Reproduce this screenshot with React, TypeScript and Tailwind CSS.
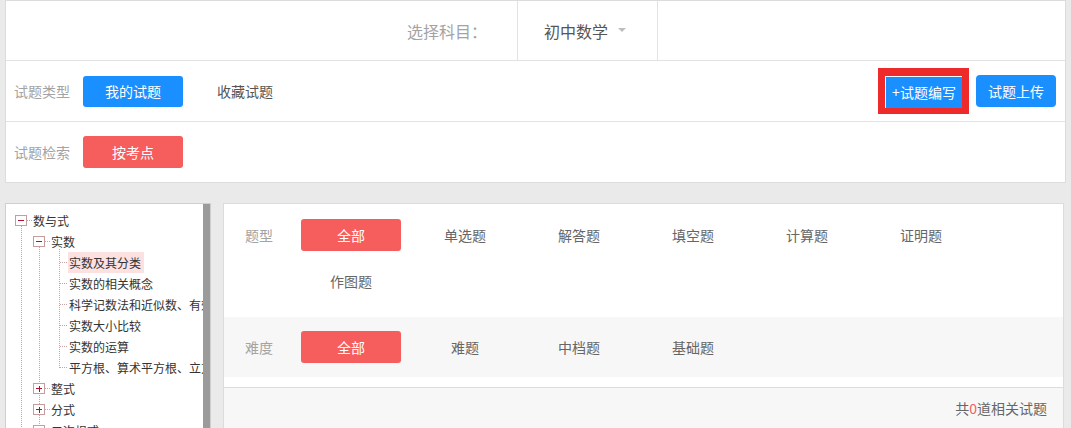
import React from "react";

const font = { fontFamily: '"Noto Sans CJK SC", "Noto Sans", sans-serif' };

const typeItems = ["全部", "单选题", "解答题", "填空题", "计算题", "证明题", "作图题"];
const levelItems = ["全部", "难题", "中档题", "基础题"];

const leaves = [
  "实数及其分类",
  "实数的相关概念",
  "科学记数法和近似数、有效数字",
  "实数大小比较",
  "实数的运算",
  "平方根、算术平方根、立方根",
];

const TreeBox = ({ open }: { open: boolean }) => (
  <svg width="12" height="11" viewBox="0 0 12 11" className="shrink-0" shapeRendering="crispEdges">
    <rect x="0.5" y="0.5" width="11" height="10" fill="#fff" stroke="#c79c9c" />
    <line x1="3" y1="5.5" x2="9" y2="5.5" stroke="#b0102a" />
    {!open && <line x1="6.5" y1="2.5" x2="6.5" y2="9" stroke="#b0102a" />}
  </svg>
);

const FilterItem = ({ label, active }: { label: string; active?: boolean }) => (
  <div className="flex h-[32px] w-[114px] items-center justify-center">
    {active ? (
      <span className="flex h-[32px] w-[100px] items-center justify-center rounded-[3px] bg-[#f65d5d] text-[14px] text-white">
        {label}
      </span>
    ) : (
      <span className="text-[14px] text-[#666]">{label}</span>
    )}
  </div>
);

const App = () => {
  return (
    <div className="h-[428px] overflow-hidden bg-[#eaeaea] px-[5px]" style={font}>
      {/* top filter card */}
      <div className="border border-[#dcdcdc] bg-white">
        <div className="flex h-[60px] border-b border-[#e2e2e2]">
          <div className="flex w-[511px] items-center justify-end pr-[30px] text-[16px] text-[#a3a3a3]">选择科目：</div>
          <div className="flex w-[141px] items-center border-x border-[#e2e2e2] pl-[26px] text-[16px] text-[#555]">
            初中数学
            <svg width="8" height="5" viewBox="0 0 8 5" className="ml-[10px]">
              <path d="M0 0 L8 0 L4 4 Z" fill="#bdbdbd" />
            </svg>
          </div>
          <div className="flex-1" />
        </div>
        <div className="flex h-[61px] items-center border-b border-[#e2e2e2] pl-[8px] pr-[9px]">
          <span className="text-[14px] text-[#a3a3a3]">试题类型</span>
          <button className="ml-[13px] flex h-[31px] w-[100px] items-center justify-center rounded-[3px] bg-[#1a8fff] text-[14px] text-white">
            我的试题
          </button>
          <span className="ml-[34px] text-[14px] text-[#555]">收藏试题</span>
          <div className="flex-1" />
          <div className="border-[7px] border-t-[8px] border-b-[6px] border-[#ee2a2a]">
            <button className="flex h-[32px] w-[77px] items-center justify-center border-l border-t border-white bg-[#1a8fff] text-[14px] text-white">
              +试题编写
            </button>
          </div>
          <button className="ml-[7px] flex h-[32px] w-[80px] items-center justify-center rounded-[4px] bg-[#1a8fff] text-[14px] text-white">
            试题上传
          </button>
        </div>
        <div className="flex h-[60px] items-center pl-[8px]">
          <span className="text-[14px] text-[#a3a3a3]">试题检索</span>
          <button className="ml-[13px] flex h-[32px] w-[100px] items-center justify-center rounded-[3px] bg-[#f65d5d] text-[14px] text-white">
            按考点
          </button>
        </div>
      </div>

      {/* lower area */}
      <div className="mt-[20px] flex h-[300px] items-start">
        {/* knowledge tree */}
        <div className="flex h-[300px] w-[206px] border border-[#cfcfcf] bg-white">
          <div className="relative flex-1 overflow-hidden whitespace-nowrap pt-[6px] text-[12px] text-[#333]">
            <svg className="absolute left-0 top-0" width="197" height="300" shapeRendering="crispEdges">
              <g stroke="#c9a3a3" strokeDasharray="1 1">
                <line x1="15.5" y1="22" x2="15.5" y2="300" />
                <line x1="21" y1="16.5" x2="27" y2="16.5" />
                <line x1="33.5" y1="43" x2="33.5" y2="300" />
                <line x1="39" y1="37.5" x2="45" y2="37.5" />
                <line x1="53.5" y1="45" x2="53.5" y2="164" />
                {leaves.map((_, i) => (
                  <line key={i} x1="54" y1={58.5 + i * 21} x2="62" y2={58.5 + i * 21} />
                ))}
                <line x1="39" y1="184.5" x2="45" y2="184.5" />
                <line x1="39" y1="205.5" x2="45" y2="205.5" />
                <line x1="39" y1="226.5" x2="45" y2="226.5" />
              </g>
            </svg>
            <div className="relative flex h-[21px] items-center pl-[9px]">
              <TreeBox open />
              <span className="ml-[6px]">数与式</span>
            </div>
            <div className="relative flex h-[21px] items-center pl-[27px]">
              <TreeBox open />
              <span className="ml-[6px]">实数</span>
            </div>
            {leaves.map((t, i) => (
              <div key={t} className="relative flex h-[21px] items-center pl-[62px]">
                <span className={`flex h-[21px] items-center pl-[1px] pr-[3px] ${i === 0 ? "bg-[#fde1e1]" : ""}`}>{t}</span>
              </div>
            ))}
            {["整式", "分式", "二次根式"].map((t) => (
              <div key={t} className="relative flex h-[21px] items-center pl-[27px]">
                <TreeBox open={false} />
                <span className="ml-[6px]">{t}</span>
              </div>
            ))}
          </div>
          <div className="w-[7px] bg-[#9b9b9b]" />
        </div>

        {/* question filter panel */}
        <div className="ml-[12px] mr-[2px] flex-1 border border-[#dcdcdc] bg-white">
          <div className="flex pl-[21px] pt-[15px] pb-[20px]">
            <div className="flex h-[32px] w-[49px] items-center text-[14px] text-[#a3a3a3]">题型</div>
            <div className="flex flex-1 flex-wrap gap-y-[14px]">
              {typeItems.map((t, i) => (
                <FilterItem key={t} label={t} active={i === 0} />
              ))}
            </div>
          </div>
          <div className="flex bg-[#f7f7f7] py-[14px] pl-[21px]">
            <div className="flex h-[32px] w-[49px] items-center text-[14px] text-[#a3a3a3]">难度</div>
            <div className="flex flex-1 flex-wrap">
              {levelItems.map((t, i) => (
                <FilterItem key={t} label={t} active={i === 0} />
              ))}
            </div>
          </div>
          <div className="h-[10px]" />
          <div className="flex h-[60px] items-start justify-end border-t border-[#dcdcdc] bg-[#f7f7f7] pr-[16px] pt-[10px] text-[14px] text-[#666]">
            共<span className="text-[#f65d5d]">0</span>道相关试题
          </div>
        </div>
      </div>
    </div>
  );
};

export default App;
